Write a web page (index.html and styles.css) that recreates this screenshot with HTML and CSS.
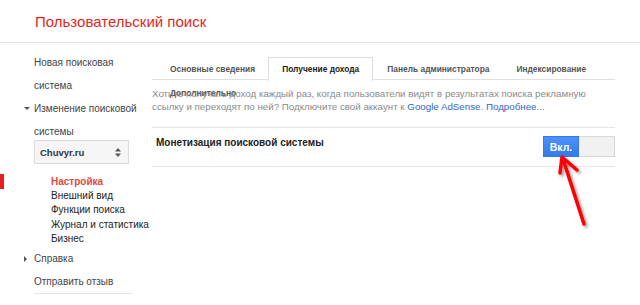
FILE: index.html
```html
<!DOCTYPE html>
<html lang="ru">
<head>
<meta charset="utf-8">
<title>Пользовательский поиск</title>
<link rel="stylesheet" href="styles.css">
</head>
<body>
<header class="header">
  <h1 class="title">Пользовательский поиск</h1>
</header>
<div class="layout">
  <nav class="sidebar">
    <a class="nav-item">Новая поисковая система</a>
    <div class="nav-group">
      <span class="caret caret-down"></span>
      <a class="nav-item">Изменение поисковой системы</a>
    </div>
    <div class="select">
      <span class="select-label">Chuvyr.ru</span>
      <span class="select-arrows">
        <svg width="6" height="9" viewBox="0 0 6 9"><path d="M3 0 L6 3.5 H0 Z M3 9 L6 5.5 H0 Z" fill="#555"/></svg>
      </span>
    </div>
    <ul class="sub-list">
      <li class="sub-item active"><span class="marker"></span>Настройка</li>
      <li class="sub-item">Внешний вид</li>
      <li class="sub-item">Функции поиска</li>
      <li class="sub-item">Журнал и статистика</li>
      <li class="sub-item">Бизнес</li>
    </ul>
    <div class="nav-group help">
      <span class="caret caret-right"></span>
      <a class="nav-item">Справка</a>
    </div>
    <a class="nav-item feedback">Отправить отзыв</a>
  </nav>
  <main class="main">
    <div class="tabs">
      <span class="tab">Основные сведения</span><span class="tab active">Получение дохода</span><span class="tab">Панель администратора</span><span class="tab">Индексирование</span><span class="tab">Дополнительно</span>
    </div>
    <p class="desc">Хотите получать доход каждый раз, когда пользователи видят в результатах поиска рекламную ссылку и переходят по ней? Подключите свой аккаунт к <a class="link">Google AdSense</a>. <a class="link">Подробнее...</a></p>
    <div class="setting">
      <span class="setting-label">Монетизация поисковой системы</span>
      <div class="toggle">
        <span class="toggle-on">Вкл.</span>
        <span class="toggle-off"></span>
      </div>
    </div>
  </main>
</div>
<svg class="arrow" width="640" height="305" viewBox="0 0 640 305">
  <defs>
    <filter id="sh" x="-30%" y="-20%" width="160%" height="140%">
      <feGaussianBlur in="SourceAlpha" stdDeviation="1.5"/>
      <feOffset dx="2" dy="2"/>
      <feComponentTransfer><feFuncA type="linear" slope="0.4"/></feComponentTransfer>
      <feMerge><feMergeNode/><feMergeNode in="SourceGraphic"/></feMerge>
    </filter>
  </defs>
  <g filter="url(#sh)" stroke="#ff0000" stroke-width="3.5" stroke-linecap="round" stroke-linejoin="round" fill="none">
    <path d="M584 224 L563 159"/>
    <path d="M560 173 L562 157 L577 170"/>
  </g>
</svg>
</body>
</html>
```

FILE: styles.css
```css
* { box-sizing: border-box; }
body {
  margin: 0;
  width: 640px;
  height: 305px;
  overflow: hidden;
  background: #fff;
  font-family: "Liberation Sans", Arial, sans-serif;
  color: #222;
  position: relative;
}
.header {
  height: 43px;
  border-bottom: 1px solid #e5e5e5;
  padding-left: 35px;
  padding-top: 1px;
  display: flex;
  align-items: center;
}
.title {
  margin: 0;
  font-size: 15px;
  font-weight: normal;
  color: #e3261c;
}
.layout {
  display: flex;
}
.sidebar {
  width: 152px;
  padding: 8px 0 0 34px;
  font-size: 10px;
  color: #444;
  display: flex;
  flex-direction: column;
}
.nav-item {
  display: block;
  line-height: 23px;
  color: #444;
  width: 110px;
}
.nav-group {
  position: relative;
}
.caret {
  position: absolute;
  left: -10px;
  width: 0;
  height: 0;
}
.caret-down {
  top: 10px;
  border-left: 3px solid transparent;
  border-right: 3px solid transparent;
  border-top: 3px solid #555;
}
.caret-right {
  top: 9px;
  border-top: 3px solid transparent;
  border-bottom: 3px solid transparent;
  border-left: 3px solid #555;
}
.select {
  margin-top: -3px;
  width: 95px;
  height: 24px;
  border: 1px solid #dcdcdc;
  background: #f5f5f5;
  display: flex;
  align-items: center;
  justify-content: space-between;
  padding: 0 7px 0 5px;
}
.select-label {
  font-weight: bold;
  font-size: 9.5px;
  color: #2a3450;
}
.select-arrows {
  display: flex;
}
.sub-list {
  list-style: none;
  margin: 11px 0 0 0;
  padding: 0 0 0 17px;
  font-size: 10px;
  color: #222;
}
.sub-item {
  line-height: 14.2px;
  position: relative;
  white-space: nowrap;
}
.sub-item.active {
  color: #dd4b39;
  font-weight: bold;
}
.marker {
  position: absolute;
  left: -51px;
  top: -1px;
  width: 4px;
  height: 15px;
  background: #e51f1f;
}
.help {
  margin-top: 1px;
}
.feedback {
  border-bottom: 1px solid #e5e5e5;
  width: 98px;
  line-height: 23px;
  margin-top: 0;
}
.main {
  width: 463px;
  padding-top: 14px;
}
.tabs {
  height: 23px;
  border-bottom: 1px solid #e0e0e0;
  padding-left: 4px;
  font-size: 8.4px;
  font-weight: bold;
  color: #555;
}
.tab {
  display: inline-block;
  line-height: 22px;
  padding: 0 12px 0 13px;
  border: 1px solid transparent;
  border-bottom: none;
  white-space: nowrap;
}
.tab.active {
  background: #fff;
  border-color: #dcdcdc;
  color: #222;
  height: 24px;
  padding-right: 13px;
}
.desc {
  margin: 8px 0 0 0;
  font-size: 9.75px;
  line-height: 12.5px;
  color: #8a8a8a;
  padding-right: 10px;
  padding-bottom: 14px;
  border-bottom: 1px solid #e5e5e5;
}
.link {
  color: #3366cc;
}
.setting {
  display: flex;
  justify-content: space-between;
  align-items: flex-start;
  padding: 8px 0 9px 4px;
  border-bottom: 1px solid #e5e5e5;
}
.setting-label {
  font-size: 10px;
  font-weight: bold;
  color: #222;
  margin-top: 1px;
}
.toggle {
  display: flex;
  height: 21px;
}
.toggle-on {
  width: 36px;
  background: linear-gradient(#4d90fe, #357ae8);
  border: 1px solid #3079ed;
  color: #fff;
  font-weight: bold;
  font-size: 10.5px;
  display: flex;
  align-items: center;
  justify-content: center;
}
.toggle-off {
  width: 36px;
  background: #f1f1f1;
  border: 1px solid #d8d8d8;
  border-left: none;
}
.arrow {
  position: absolute;
  left: 0;
  top: 0;
  pointer-events: none;
}
```
